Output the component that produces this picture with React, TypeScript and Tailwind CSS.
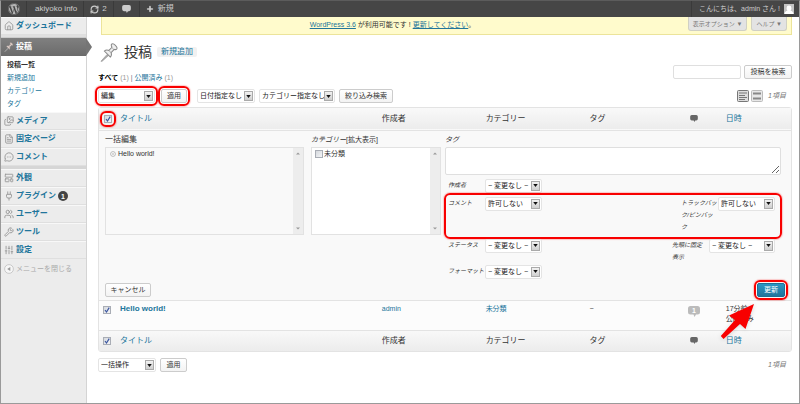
import { useState } from "react";
import type { ReactNode } from "react";
import {
  FileText,
  House,
  Images,
  LayoutTemplate,
  MessageCircleMore,
  Plug,
  Plus,
  RefreshCw,
  SlidersVertical,
  Users,
  Wrench,
} from "lucide-react";
import { FaWordpress } from "react-icons/fa";

const subMenu = ["投稿一覧", "新規追加", "カテゴリー", "タグ"];

const menuTop = [
  { label: "メディア", icon: Images },
  { label: "固定ページ", icon: FileText },
  { label: "コメント", icon: MessageCircleMore },
];

const menuBottom = [
  { label: "外観", icon: LayoutTemplate },
  { label: "プラグイン", icon: Plug, count: 1 },
  { label: "ユーザー", icon: Users },
  { label: "ツール", icon: Wrench },
  { label: "設定", icon: SlidersVertical },
];

const PinIcon = ({ className, fill = "#eee" }: { className: string; fill?: string }) => (
  <svg viewBox="0 0 20 20" className={className} aria-hidden="true">
    <path d="M7.5 12 1 19.2l1 .2L9 13.2z" fill="#aaa" stroke="#999" strokeWidth=".7" />
    <path
      d="M12.2 1.2c1-.8 2.600-.2 4 1.200s2.200 3.100 1.300 4.100c-.7.700-1.700.5-2.500.2l-3.300 3.400c.6 1.800.5 3.500-.8 4.700L4.600 8.500c1.300-1.200 3-1.300 4.800-.7l3.200-3.300c-.6-1.100-1-2.500-.4-3.300z"
      fill={fill}
      stroke="#888"
      strokeWidth="1.100"
    />
    <path d="m13 5.500 2 1.800M9.500 8 12 10.500" stroke="#999" strokeWidth=".9" />
  </svg>
);

const Bubble = ({ className, count }: { className: string; count?: number }) => (
  <svg viewBox="0 0 12 11" className={className} aria-hidden="true">
    <path d="M2.500 0h7A2.500 2.500 0 0 1 12 2.500v3.500A2.500 2.500 0 0 1 9.500 8.500H8L6.500 11 5.500 8.500h-3A2.500 2.500 0 0 1 0 6V2.500A2.500 2.500 0 0 1 2.500 0z" fill="currentColor" />
    {count && (
      <text x="6" y="7" textAnchor="middle" fontSize="7" fontWeight="bold" fill="#fff">
        {count}
      </text>
    )}
  </svg>
);

// red frame laid over the thing it points at
const Marked = ({ children, className = "" }: { children: ReactNode; className?: string }) => (
  <span className={`relative inline-flex ${className}`}>
    {children}
    <span className="pointer-events-none absolute -inset-[3px] z-10 rounded-md border-2 border-[#f80000] shadow-[0_0_1px_1px_#ff000033]" />
  </span>
);

const Select = ({
  label,
  options,
  className,
  id,
}: {
  label?: string;
  options: string[];
  className: string;
  id?: string;
}) => (
  <span className={`relative inline-flex h-[14px] ${className}`}>
    <select
      id={id}
      aria-label={label}
      className="h-full w-full appearance-none rounded-[2px] border border-[#e4e4e4] bg-white pl-[2px] text-[7px] leading-3 text-[#222]"
    >
      {options.map((o) => (
        <option key={o}>{o}</option>
      ))}
    </select>
    <span className="pointer-events-none absolute top-[2px] right-[2px] flex h-[10px] w-[9px] items-center justify-center border border-[#aaa] bg-gradient-to-b from-[#f2f2f2] to-[#cfcfcf]">
      <svg viewBox="0 0 6 4" className="h-[3px] w-[5px]">
        <path d="M0 0h6L3 4z" fill="#111" />
      </svg>
    </span>
  </span>
);

const Button = ({ children, className = "" }: { children: ReactNode; className?: string }) => (
  <button
    type="button"
    className={`h-[14px] rounded-[2px] border border-[#ccc] bg-gradient-to-b from-white to-[#f3f3f3] text-center text-[7px] leading-3 whitespace-nowrap text-[#333] ${className}`}
  >
    {children}
  </button>
);

const Check = ({
  label,
  checked,
  onChange,
}: {
  label: string;
  checked: boolean;
  onChange: (v: boolean) => void;
}) => (
  <span className="relative inline-flex size-2">
    <input
      type="checkbox"
      aria-label={label}
      checked={checked}
      onChange={(e) => onChange(e.target.checked)}
      className="size-2 appearance-none border border-[#a9adb5] bg-gradient-to-br from-[#d5d8dd] to-[#f4f5f7]"
    />
    {checked && (
      <svg viewBox="0 0 8 8" className="pointer-events-none absolute inset-0 size-2">
        <path d="M2 4l1.500 2L6.200 1.600" fill="none" stroke="#3b56a0" strokeWidth="1.200" />
      </svg>
    )}
  </span>
);

const ScrollTrack = () => (
  <span className="flex w-[10px] shrink-0 flex-col items-center justify-between bg-[#ededed] py-1">
    <svg viewBox="0 0 6 3" className="h-[3px] w-1">
      <path d="M0 3h6L3 0z" fill="#999" />
    </svg>
    <svg viewBox="0 0 6 3" className="h-[3px] w-1">
      <path d="M0 0h6L3 3z" fill="#999" />
    </svg>
  </span>
);

const MenuItem = ({
  label,
  icon: Icon,
  count,
}: {
  label: string;
  icon: typeof House;
  count?: number;
}) => (
  <li>
    <a
      href="#"
      className="flex h-[18px] items-center border-t border-t-[#f8f8f8] border-b border-b-[#dfdfdf] pl-[3px] text-[8px] font-bold whitespace-nowrap text-[#21759b]"
    >
      <Icon className="mr-[2px] size-[10px] shrink-0 text-[#929292]" strokeWidth={2} />
      {label}
      {count && (
        <span className="ml-[2px] flex size-[10px] items-center justify-center rounded-full bg-[#444] text-[7px] leading-none text-white">
          {count}
        </span>
      )}
    </a>
  </li>
);

const AdminBar = () => (
  <header className="flex h-4 items-stretch bg-[#464646] text-[8px] leading-4 text-[#ccc]">
    <a href="#" aria-label="WordPress" className="flex w-[26px] items-center justify-center border-r border-[#3a3a3a]">
      <FaWordpress className="size-3 text-[#b4b4b4]" />
    </a>
    <a href="#" className="border-r border-[#3a3a3a] pr-[6px] pl-2">
      akiyoko info
    </a>
    <a href="#" className="flex items-center gap-[3px] border-r border-[#3a3a3a] px-[6px]">
      <RefreshCw className="size-[9px]" strokeWidth={3} />2
    </a>
    <a href="#" aria-label="コメント" className="flex items-center border-r border-[#3a3a3a] px-2">
      <Bubble className="h-2 w-[9px]" />
    </a>
    <a href="#" className="flex items-center gap-1 px-[6px]">
      <Plus className="size-2" strokeWidth={5} />
      新規
    </a>
    <a href="#" className="ml-auto flex items-center gap-1 border-l border-[#3a3a3a] pr-[5px] pl-[7px] text-[7px]">
      こんにちは、admin さん !
      <svg viewBox="0 0 10 10" className="size-[10px]">
        <path d="M0 0h10v10H0z" fill="#c4c4c4" />
        <path d="M.5 10c0-2 1.500-3 3-3.300C2.700 6 2.600 5 2.600 4a2.400 2.400 0 0 1 4.800 0c0 1-.1 2-.9 2.700 1.500.3 3 1.300 3 3.300z" fill="#fff" />
      </svg>
    </a>
  </header>
);

const SideMenu = () => (
  <nav className="w-[86px] shrink-0 border-r border-[#d4d4d4] bg-[#ececec]">
    <ul>
      <MenuItem label="ダッシュボード" icon={House} />
      <li className="h-[3px] border-b border-[#ccc] bg-[#e0e0e0]" />
      <li>
        <a
          href="#"
          className="relative flex h-[18px] items-center bg-gradient-to-b from-[#808080] to-[#6b6b6b] pl-[3px] text-[8px] font-bold text-white"
        >
          <PinIcon className="mr-[2px] size-[10px]" fill="#e3cfc8" />
          投稿
          <svg viewBox="0 0 6 18" className="absolute top-0 left-full h-[18px] w-[6px]">
            <path d="M0 0 6 9 0 18z" fill="#757575" />
          </svg>
        </a>
        <ul className="bg-white pt-[2px] pb-[2px]">
          {subMenu.map((s, i) => (
            <li key={s}>
              <a
                href="#"
                className={`block pl-[6px] text-[7px] leading-[13px] ${i === 0 ? "font-bold text-[#333]" : "text-[#21759b]"}`}
              >
                {s}
              </a>
            </li>
          ))}
        </ul>
      </li>
      {menuTop.map((m) => (
        <MenuItem key={m.label} {...m} />
      ))}
      <li className="h-[3px] bg-[#d6d6d6]" />
      {menuBottom.map((m) => (
        <MenuItem key={m.label} {...m} />
      ))}
    </ul>
    <button type="button" className="flex h-[20px] items-center gap-[2px] pl-[3px] text-[7px] whitespace-nowrap text-[#aaa]">
      <svg viewBox="0 0 10 10" className="size-[10px]">
        <circle cx="5" cy="5" r="4.400" fill="#f6f6f6" stroke="#c4c4c4" strokeWidth=".9" />
        <path d="M6.300 3v4L3.200 5z" fill="#999" />
      </svg>
      メニューを閉じる
    </button>
  </nav>
);

const noChange = "− 変更なし −";

const Field = ({
  id,
  label,
  options,
  selectClass = "w-[57px]",
}: {
  id: string;
  label: string;
  options: string[];
  selectClass?: string;
}) => (
  <div className="flex items-start">
    <label htmlFor={id} className="w-[37px] shrink-0 text-[6px] leading-3 whitespace-pre-line italic">
      {label}
    </label>
    <Select id={id} options={options} className={selectClass} />
  </div>
);

const BulkEdit = () => (
  <div className="px-[6px] pt-[2px] pb-[3px]">
    <div className="flex items-start">
      <fieldset className="mr-[7px] w-[199px] shrink-0">
        <legend className="text-[8px] leading-[14px]">一括編集</legend>
        <div className="flex h-[88px] border border-[#e2e2e2] text-[7px]">
          <div className="flex flex-1 items-start gap-px pt-[2px] pl-[3px] leading-2">
            <button type="button" aria-label="Hello world! を外す" className="size-2 p-px">
              <svg viewBox="0 0 6 6" className="size-[6px]">
                <circle cx="3" cy="3" r="2.400" fill="#fff" stroke="#aaa" strokeWidth=".8" />
                <path d="m2 2 2 2m0-2L2 4" stroke="#bbb" strokeWidth=".6" />
              </svg>
            </button>
            Hello world!
          </div>
          <ScrollTrack />
        </div>
      </fieldset>
      <fieldset className="mr-1 w-[130px] shrink-0">
        <legend className="text-[7px] leading-[14px] whitespace-nowrap">
          <i>カテゴリー</i>[拡大表示]
        </legend>
        <div className="flex h-[88px] border border-[#e2e2e2] bg-white text-[7px]">
          <label className="flex flex-1 items-start gap-px pt-[2px] pl-[3px] leading-2">
            <input type="checkbox" className="size-2 appearance-none border border-[#a9adb5] bg-gradient-to-br from-[#d5d8dd] to-[#f4f5f7]" />
            未分類
          </label>
          <ScrollTrack />
        </div>
      </fieldset>
      <fieldset className="min-w-0 flex-1">
        <label htmlFor="tags" className="block text-[7px] leading-[14px] italic">
          タグ
        </label>
        <div className="pr-1">
          <textarea id="tags" className="block h-7 w-full rounded-[2px] border border-[#dfdfdf] bg-white" />
        </div>
        <div className="flex flex-col pt-1 pr-[10px] pl-[3px]">
          <Field id="author" label="作成者" options={[noChange]} />
          <div className="relative mt-1 flex h-[42px] items-start justify-between">
            <Field id="comment" label="コメント" options={["許可しない", "許可"]} />
            <Field id="ping" label="トラックバック/ピンバック" options={["許可しない", "許可"]} />
            <span className="pointer-events-none absolute -top-1 -right-[7px] bottom-0 -left-1 rounded-md border-2 border-[#f80000] shadow-[0_0_1px_1px_#ff000033]" />
          </div>
          <div className="flex items-start justify-between">
            <Field id="status" label="ステータス" options={[noChange]} />
            <Field id="sticky" label={"先頭に固定\n表示"} options={[noChange]} selectClass="w-[66px]" />
          </div>
          <div className="pt-[2px]">
            <Field id="format" label="フォーマット" options={[noChange]} />
          </div>
        </div>
      </fieldset>
    </div>
    <div className="flex items-center justify-between pt-1">
      <Button className="w-[46px]">キャンセル</Button>
      <Marked>
        <button
          type="button"
          className="h-[14px] w-7 rounded-[2px] border border-[#1e6f95] bg-gradient-to-b from-[#2a95c5] to-[#21759b] text-[7px] leading-3 text-white"
        >
          更新
        </button>
        <svg viewBox="0 0 36 38" className="pointer-events-none absolute top-[20px] right-[29px] z-20 h-[38px] w-9 drop-shadow-sm">
          <path d="M34 1 25.500 26l-5.500-5L3.500 36 .8 33 15 17l-6-4.500z" fill="#f80000" />
        </svg>
      </Marked>
    </div>
  </div>
);

const HeadCells = () => (
  <>
    <th className="pl-1 font-normal">
      <a href="#" className="text-[#21759b]">タイトル</a>
    </th>
    <th className="pl-[6px] font-normal">作成者</th>
    <th className="pl-[6px] font-normal">カテゴリー</th>
    <th className="pl-[6px] font-normal">タグ</th>
    <th className="pl-[6px]" aria-label="コメント">
      <Bubble className="ml-1 h-[7px] w-2 text-[#666]" />
    </th>
    <th className="pl-1 font-normal">
      <a href="#" className="text-[#21759b]">日時</a>
    </th>
  </>
);

const ViewIcon = ({ active }: { active?: boolean }) => (
  <svg viewBox="0 0 12 12" className="size-3">
    <rect x=".5" y=".5" width="11" height="11" rx="1" fill={active ? "#ddd" : "#e8e8e8"} stroke={active ? "#777" : "#bbb"} />
    {active ? (
      <path d="M2 3h8M2 5.500h6M2 7.500h8M2 9.500h6" stroke="#777" />
    ) : (
      <path d="M2 3.500h8M2 8.500h8" stroke="#888" strokeWidth="2" />
    )}
  </svg>
);

const App = () => {
  const [checked, setChecked] = useState<boolean>(true);

  return (
    <div
      lang="ja"
      className="flex min-h-screen flex-col border border-[#9a9a9a] border-t-[#5c5c5c] bg-white font-['Liberation_Sans','Noto_Sans_CJK_JP',sans-serif] text-[8px] text-[#333]"
    >
      <AdminBar />
      <div className="flex flex-1">
        <SideMenu />
        <main className="min-w-0 flex-1 pr-[7px] pl-[11px]">
          <div className="relative ml-[3px] h-[18px] border border-t-0 border-[#ece49a] bg-[#fffbcc] pr-[108px] text-center text-[7px] leading-4">
            <a href="#" className="text-[#21759b] underline">WordPress 3.6</a> が利用可能です !{" "}
            <a href="#" className="text-[#21759b] underline">更新してください</a>。
            <div className="absolute top-0 right-1 flex gap-1">
              {["表示オプション", "ヘルプ"].map((t) => (
                <button
                  key={t}
                  type="button"
                  className="h-[14px] rounded-b-[3px] border border-t-0 border-[#d0d0c4] bg-[#e3e3e3] px-1 text-[6px] leading-3 text-[#777]"
                >
                  {t} ▼
                </button>
              ))}
            </div>
          </div>

          <div className="flex h-[34px] items-center pl-[2px]">
            <PinIcon className="mr-[5px] size-[19px]" />
            <h1 className="text-[14px] leading-5">投稿</h1>
            <a href="#" className="ml-[5px] rounded-[2px] bg-[#f1f1f1] px-1 text-[8px] leading-[10px] text-[#21759b]">
              新規追加
            </a>
          </div>

          <div className="flex h-[18px] items-start justify-between">
            <p className="pt-[3px] text-[7px] leading-3 text-[#999]">
              <a href="#" className="font-bold text-black">すべて</a> (1) <span className="text-[#777]">|</span>{" "}
              <a href="#" className="text-[#21759b]">公開済み</a> (1)
            </p>
            <form className="-mt-1 flex gap-[3px]" onSubmit={(e) => e.preventDefault()}>
              <input type="text" aria-label="投稿を検索" className="h-[14px] w-[68px] rounded-[2px] border border-[#dfdfdf] bg-white px-1" />
              <Button className="w-12">投稿を検索</Button>
            </form>
          </div>

          <div className="mt-[2px] flex h-[18px] items-start">
            <Marked>
              <Select label="一括操作" options={["編集", "一括操作", "ゴミ箱へ移動"]} className="w-[57px]" />
            </Marked>
            <Marked className="ml-[6px]">
              <Button className="w-[26px]">適用</Button>
            </Marked>
            <Select label="日付" options={["日付指定なし"]} className="ml-[10px] w-[58px]" />
            <Select label="カテゴリー" options={["カテゴリー指定なし"]} className="ml-1 w-[76px]" />
            <Button className="ml-1 w-[54px]">絞り込み検索</Button>
            <div className="ml-auto flex items-center gap-[2px] pt-px pr-[6px]">
              <a href="#" aria-label="リスト表示"><ViewIcon active /></a>
              <a href="#" aria-label="抜粋表示"><ViewIcon /></a>
              <span className="pl-[3px] text-[7px] whitespace-nowrap text-[#777] italic">1項目</span>
            </div>
          </div>

          <div className="rounded-[3px] border border-[#e3e3e3] bg-[#f9f9f9]">
            <table className="w-full table-fixed border-collapse text-left text-[8px] leading-[10px]">
              <colgroup>
                <col className="w-[17px]" />
                <col />
                <col className="w-[15%]" />
                <col className="w-[15%]" />
                <col className="w-[14%]" />
                <col className="w-[6%]" />
                <col className="w-[10%]" />
              </colgroup>
              <thead>
                <tr className="h-[22px] border-b border-[#e3e3e3] bg-gradient-to-b from-[#f9f9f9] to-[#ececec]">
                  <th className="pl-1 align-middle">
                    <Marked className="align-middle">
                      <span className="-m-[2px] flex p-[3px]">
                        <Check label="すべて選択" checked={checked} onChange={setChecked} />
                      </span>
                    </Marked>
                  </th>
                  <HeadCells />
                </tr>
              </thead>
              <tbody>
                <tr className="border-b border-[#e3e3e3]">
                  <td colSpan={7}>
                    <BulkEdit />
                  </td>
                </tr>
                <tr className="h-[30px] border-b border-[#e3e3e3] bg-[#fcfcfc] align-top">
                  <td className="pt-[5px] pl-1">
                    <Check label="Hello world! を選択" checked={checked} onChange={setChecked} />
                  </td>
                  <td className="pt-[3px] pl-1">
                    <a href="#" className="font-bold text-[#21759b]">Hello world!</a>
                  </td>
                  <td className="pt-[3px] pl-[6px] text-[7px]">
                    <a href="#" className="text-[#21759b]">admin</a>
                  </td>
                  <td className="pt-[3px] pl-[6px] text-[7px]">
                    <a href="#" className="text-[#21759b]">未分類</a>
                  </td>
                  <td className="pt-[3px] pl-[6px] text-[7px]">−</td>
                  <td className="pt-[5px] pl-2">
                    <Bubble className="h-[11px] w-3 text-[#bbb]" count={1} />
                  </td>
                  <td className="pt-[3px] pl-1 text-[7px] whitespace-nowrap">
                    17分前
                    <br />
                    公開済み
                  </td>
                </tr>
              </tbody>
              <tfoot>
                <tr className="h-[21px] bg-gradient-to-b from-[#f9f9f9] to-[#ececec]">
                  <td className="pl-1">
                    <span className="flex">
                      <Check label="すべて選択" checked={checked} onChange={setChecked} />
                    </span>
                  </td>
                  <HeadCells />
                </tr>
              </tfoot>
            </table>
          </div>

          <div className="flex items-center pt-[6px]">
            <Select label="一括操作" options={["一括操作", "編集"]} className="w-[58px]" />
            <Button className="ml-1 w-[27px]">適用</Button>
            <span className="ml-auto pr-[6px] text-[7px] text-[#777] italic">1項目</span>
          </div>
        </main>
      </div>
    </div>
  );
};

export default App;
